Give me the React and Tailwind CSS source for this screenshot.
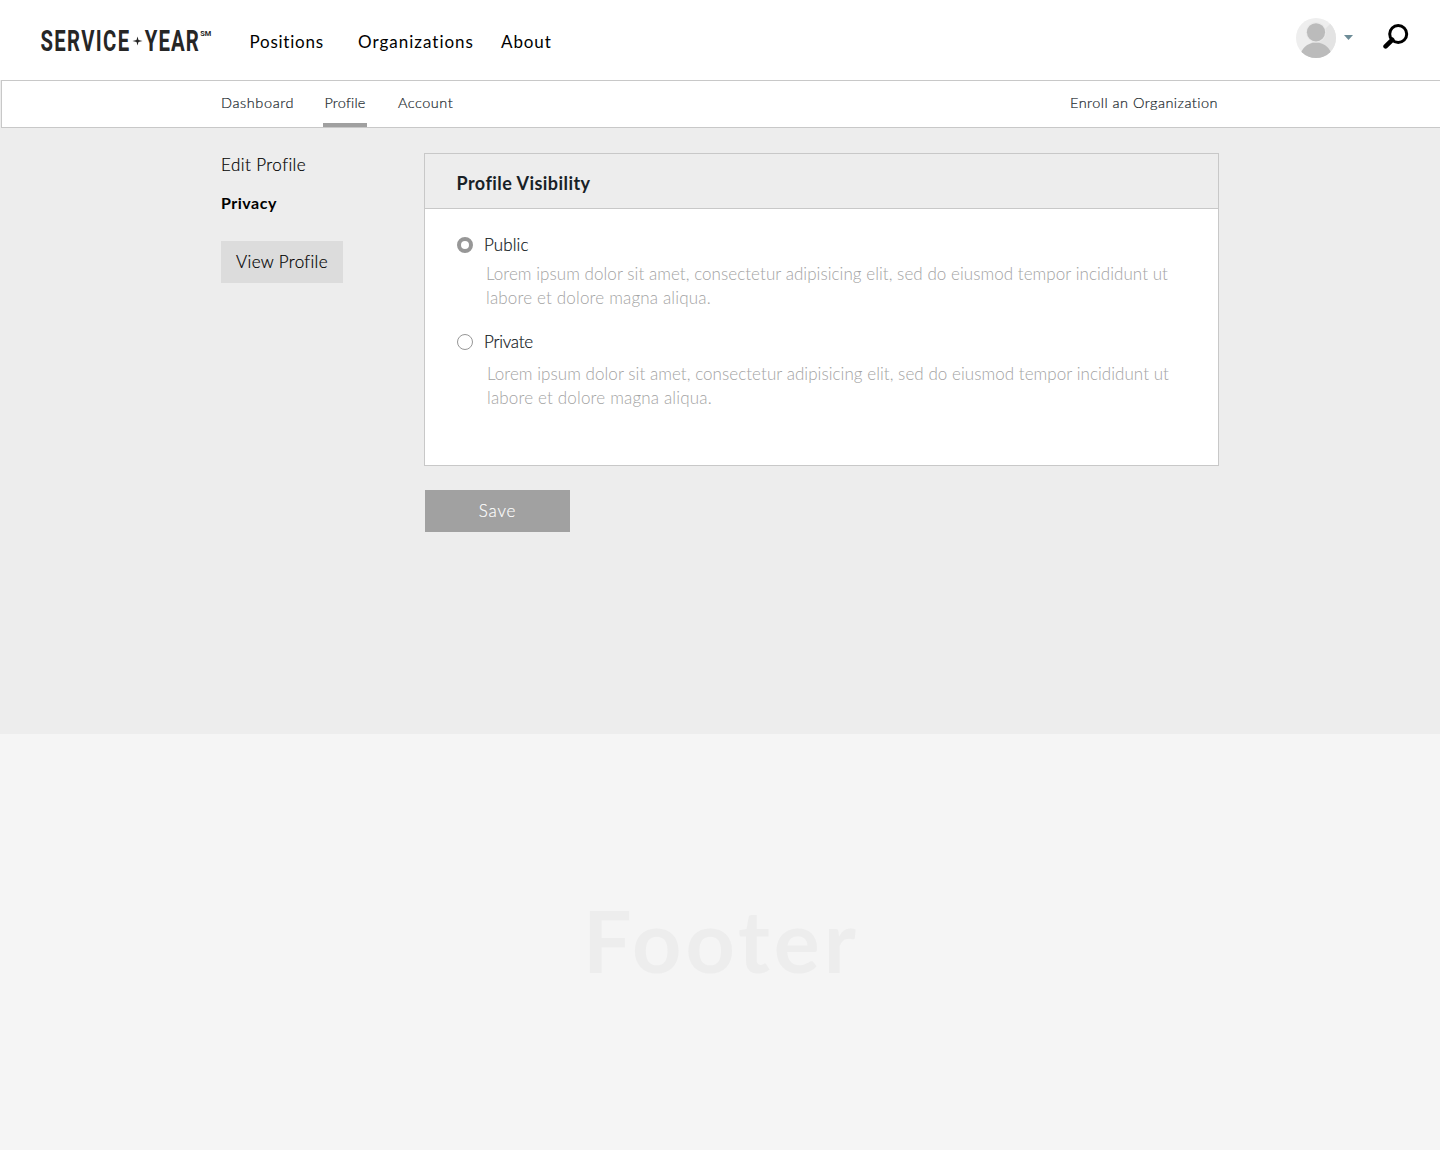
import React from "react";

function Logo() {
  return (
    <svg className="h-[40px] w-[174px] shrink-0 overflow-visible fill-[#262626] font-['Roboto'] font-bold" viewBox="0 0 174 40" aria-hidden="true">
      <text x="0.5" y="31" fontSize="29.5" letterSpacing="2" textLength="90" lengthAdjust="spacingAndGlyphs">SERVICE</text>
      <path d="M97.5 16.5 L98.5 20 L102.5 21 L98.5 22 L97.5 25.5 L96.5 22 L92.5 21 L96.5 20 Z" />
      <text x="104.8" y="31" fontSize="29.5" letterSpacing="1.6" textLength="55.2" lengthAdjust="spacingAndGlyphs">YEAR</text>
      <text x="160.2" y="16" fontSize="7.5" textLength="11" lengthAdjust="spacingAndGlyphs">SM</text>
    </svg>
  );
}

function Avatar() {
  return (
    <svg className="size-10" viewBox="0 0 40 40" aria-hidden="true">
      <clipPath id="avatar-clip">
        <circle cx="20" cy="20" r="20" />
      </clipPath>
      <g clipPath="url(#avatar-clip)">
        <rect width="40" height="40" fill="#eeeeee" />
        <path d="M40 0 L0 40 H40 Z" fill="#e3e3e3" />
        <ellipse cx="20" cy="40" rx="16" ry="15.5" fill="#bbbbbb" />
        <circle cx="20" cy="14.3" r="10.2" fill="#e9e9e9" />
        <circle cx="20" cy="14.3" r="9.1" fill="#bbbbbb" />
      </g>
    </svg>
  );
}

function SearchIcon() {
  return (
    <svg className="h-[26px] w-[26px]" viewBox="0 0 26 26" fill="none" stroke="#000" aria-hidden="true">
      <circle cx="15.2" cy="10" r="8.5" strokeWidth="3" />
      <path d="M9.2 15.8 L2.6 22.4" strokeWidth="4.6" strokeLinecap="round" />
    </svg>
  );
}

function Header() {
  return (
    <header className="flex h-20 items-start bg-white pr-[31px] pl-10 text-[17px] leading-6 text-black">
      <div className="pt-5">
        <Logo />
      </div>
      <nav className="flex pt-[30px] pl-[35.5px] whitespace-nowrap">
        <a className="w-[108.5px] tracking-[0.75px]">Positions</a>
        <a className="w-[143px] tracking-[1px]">Organizations</a>
        <a className="tracking-[0.9px]">About</a>
      </nav>
      <div className="ml-auto flex pt-[18px]">
        <Avatar />
        <svg className="mt-[17px] ml-2 h-[5px] w-[9px]" viewBox="0 0 9 5" aria-hidden="true">
          <path d="M0 0 H9 L4.5 5 Z" fill="#6d8c97" />
        </svg>
        <div className="mt-[6px] ml-[30px]">
          <SearchIcon />
        </div>
      </div>
    </header>
  );
}

function SubNav() {
  return (
    <div className="bg-[#ededed] pl-px">
      <nav className="flex h-12 border-y border-l border-[#c8c8c8] bg-white pr-[222px] pl-[219px] text-[14.5px] leading-[44px] font-light whitespace-nowrap text-[#20282d] [-webkit-text-stroke:0.2px]">
        <a className="w-[102px] tracking-[0.6px]">Dashboard</a>
        <a className="flex w-11 justify-center border-b-4 border-[#a0a0a0] tracking-[0.2px]">Profile</a>
        <a className="ml-[31px] tracking-[0.5px]">Account</a>
        <a className="ml-auto tracking-[0.47px]">Enroll an Organization</a>
      </nav>
    </div>
  );
}

function Option({ label, labelClass, checked, bodyClass }) {
  return (
    <div>
      <label className="flex h-6 items-center">
        {checked ? (
          <span className="size-4 rounded-full border-[4.5px] border-[#979797] bg-white" />
        ) : (
          <span className="size-4 rounded-full border border-[#979797] bg-white" />
        )}
        <span className={labelClass}>{label}</span>
      </label>
      <p className={bodyClass}>
        Lorem ipsum dolor sit amet, consectetur adipisicing elit, sed do eiusmod tempor incididunt ut
        <br />
        <span className="tracking-[0.17px]">labore et dolore magna aliqua.</span>
      </p>
    </div>
  );
}

export default function App() {
  return (
    <div className="flex min-h-[1150px] flex-col bg-[#f5f5f5] font-['Lato',sans-serif]">
      <Header />
      <SubNav />
      <main className="flex h-[606px] bg-[#ededed] pt-[25px] pl-[221px] text-[17px] leading-6 text-black">
        <aside className="flex w-[203px] flex-col items-start font-light whitespace-nowrap">
          <a className="tracking-[0.45px] [-webkit-text-stroke:0.2px]">Edit Profile</a>
          <a className="mt-[14px] text-base leading-6 font-bold tracking-[0.5px]">Privacy</a>
          <button className="mt-[26px] h-[42px] w-[122px] bg-[#dcdcdc] tracking-[0.35px] [-webkit-text-stroke:0.2px]">View Profile</button>
        </aside>
        <section>
          <div className="h-[313px] w-[795px] border border-[#c8c8c8] bg-white">
            <h2 className="h-[55px] border-b border-[#c8c8c8] bg-[#ededed] pl-[31.5px] text-lg leading-[58px] font-bold tracking-[0.45px] text-[#182126]">
              Profile Visibility
            </h2>
            <div className="pt-6 pl-8">
              <Option
                label="Public"
                checked
                labelClass="ml-[11px] font-light tracking-[0.1px] text-[#10181c] [-webkit-text-stroke:0.2px]"
                bodyClass="mt-[5px] ml-[29px] w-[700px] font-light tracking-[0.052px] text-[#a3a3a3]"
              />
              <div className="h-5" />
              <Option
                label="Private"
                labelClass="ml-[11px] font-light tracking-[-0.25px] text-[#10181c] [-webkit-text-stroke:0.2px]"
                bodyClass="mt-2 ml-[30px] w-[700px] font-light tracking-[0.052px] text-[#a3a3a3]"
              />
            </div>
          </div>
          <button className="mt-6 ml-px h-[42px] w-[145px] bg-[#a1a1a1] font-light tracking-[0.8px] text-white [-webkit-text-stroke:0.15px]">Save</button>
        </section>
      </main>
      <footer className="flex h-[412px] items-center justify-center pl-[3px] text-[86px] leading-none font-bold tracking-[4.1px] text-[#ededed]">
        Footer
      </footer>
    </div>
  );
}
